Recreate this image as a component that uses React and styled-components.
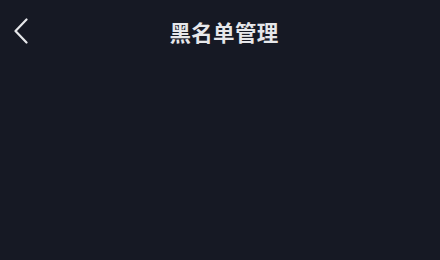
import React from 'react';
import styled, { createGlobalStyle } from 'styled-components';

const GlobalStyle = createGlobalStyle`
  html, body {
    margin: 0;
    padding: 0;
    background: #161924;
  }
  body {
    font-family: "Noto Sans CJK SC", "Noto Sans", sans-serif;
  }
`;

const Page = styled.div`
  width: 440px;
  height: 260px;
  background: #161924;
  display: flex;
  flex-direction: column;
`;

const NavBar = styled.header`
  height: 62px;
  display: grid;
  grid-template-columns: 60px 1fr 56px;
  align-items: center;
  padding-left: 4px;
`;

const BackButton = styled.button`
  background: none;
  border: none;
  padding: 0 0 0 9px;
  width: 40px;
  height: 40px;
  display: flex;
  align-items: center;
  cursor: pointer;
`;

const Title = styled.h1`
  margin: 0;
  text-align: center;
  font-size: 21.5px;
  font-weight: 700;
  color: #e6e7ea;
  letter-spacing: 0.3px;
`;

function ChevronLeft() {
  return (
    <svg width="16" height="26" viewBox="0 0 16 26" fill="none">
      <path d="M13.5 1.5 L2.5 13 L13.5 24.5" stroke="#e6e7ea" strokeWidth="2.2" strokeLinecap="round" strokeLinejoin="round" />
    </svg>
  );
}

export default function App() {
  return (
    <Page>
      <GlobalStyle />
      <NavBar>
        <BackButton aria-label="返回">
          <ChevronLeft />
        </BackButton>
        <Title>黑名单管理</Title>
        <div />
      </NavBar>
    </Page>
  );
}
